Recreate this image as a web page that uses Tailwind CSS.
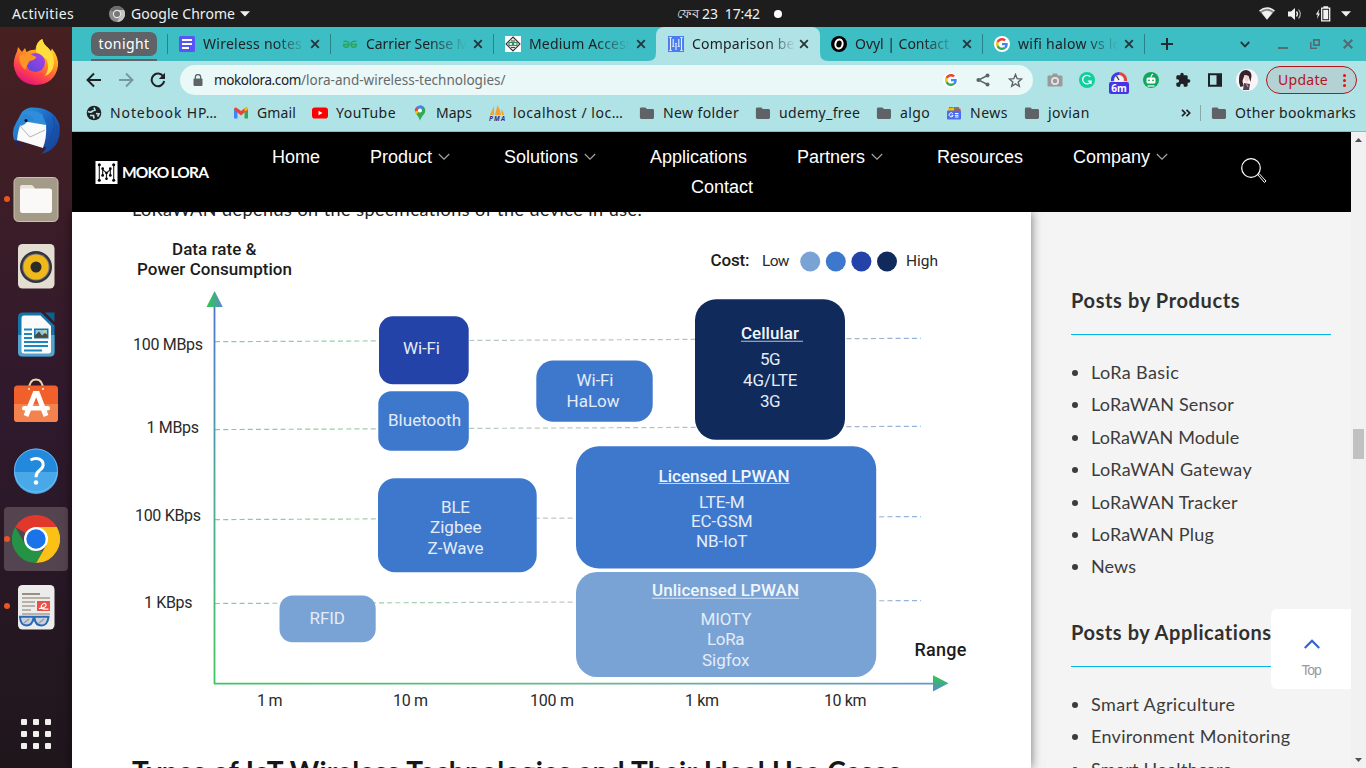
<!DOCTYPE html>
<html lang="en">
<head>
<meta charset="utf-8">
<title>Comparison between LoRa and wireless technologies</title>
<script src="https://cdn.jsdelivr.net/npm/@tailwindcss/browser@4"></script>
</head>
<body class="w-[1366px] h-[768px] overflow-hidden flex flex-col font-['Noto_Sans',sans-serif] text-[14px] text-[#202124]">
<svg class="hidden">
  <symbol id="x" viewBox="0 0 10 10"><path d="M1.2 1.2l7.6 7.6M8.800 1.200L1.200 8.800" stroke="#263338" stroke-width="1.800" fill="none"/></symbol>
  <symbol id="folder" viewBox="0 0 16 16"><path d="M2.200 2.500h4.200l1.600 1.600h5.600q1.400 0 1.400 1.400v7q0 1.400-1.400 1.400H2.300q-1.400 0-1.400-1.400V3.900q0-1.400 1.300-1.400z" fill="#5f6368"/></symbol>
  <symbol id="g" viewBox="0 0 48 48"><path fill="#ea4335" d="M24 9.500c3.540 0 6.710 1.220 9.210 3.600l6.850-6.850C35.900 2.380 30.470 0 24 0 14.620 0 6.510 5.380 2.560 13.220l7.980 6.190C12.430 13.720 17.740 9.500 24 9.500z"/><path fill="#4285f4" d="M46.980 24.550c0-1.570-.15-3.090-.38-4.550H24v9.020h12.940c-.58 2.960-2.260 5.480-4.780 7.180l7.730 6c4.510-4.180 7.090-10.360 7.090-17.650z"/><path fill="#fbbc05" d="M10.530 28.590c-.48-1.450-.76-2.990-.76-4.590s.27-3.140.76-4.590l-7.980-6.190C.92 16.460 0 20.120 0 24s.92 7.540 2.560 10.780l7.970-6.190z"/><path fill="#34a853" d="M24 48c6.480 0 11.930-2.130 15.890-5.810l-7.730-6c-2.150 1.450-4.920 2.300-8.160 2.300-6.260 0-11.570-4.220-13.470-9.910l-7.980 6.190C6.510 42.620 14.620 48 24 48z"/></symbol>
  <symbol id="chev" viewBox="0 0 12 8"><path d="M.8 1L6 6.200 11.200 1" stroke="#a8a8a8" stroke-width="1.100" fill="none"/></symbol>
</svg>

<!-- desktop bar -->
<header class="h-[27px] shrink-0 bg-[#1d1d1d] text-[#f0f0f0] flex items-center">
  <span class="ml-3 w-[97px] tracking-[0.37px]">Activities</span>
  <svg class="size-4" viewBox="0 0 16 16"><circle cx="8" cy="8" r="8" fill="#8b8b8b"/><path d="M8 4h7A8 8 0 0 1 8 16l3.500-6z" fill="#c4c4c4"/><path d="M1.200 4.100A8 8 0 0 1 15 4H8a4 4 0 0 0-3.400 2z" fill="#6c6c6c"/><circle cx="8" cy="8" r="4.200" fill="#e5e5e5"/><circle cx="8" cy="8" r="3" fill="#777"/></svg>
  <span class="ml-1.5 w-[109px] tracking-[0.05px]">Google Chrome</span>
  <svg class="w-[10px] h-[6px]" viewBox="0 0 10 6"><path d="M0 .3h10L5 5.500z" fill="#f0f0f0"/></svg>
  <span class="ml-[427px] w-[25px] text-[13px]">ফেব</span>
  <span class="w-[71px] whitespace-pre tracking-[-0.120px]">23  17:42</span>
  <i class="size-2 rounded-full bg-white ml-[1px]"></i>
  <svg class="ml-[477px] w-4 h-[14px]" viewBox="0 0 16 14"><path d="M.5 4Q8-2 15.500 4L8 13z" fill="#8a8a8a"/><path d="M.5 4Q8-2 15.500 4" stroke="#f2f2f2" stroke-width="1.400" fill="none"/><path d="M2.600 5.800Q8 1.800 13.400 5.800L8 12.600z" fill="#f2f2f2"/></svg>
  <svg class="ml-3 w-4 h-[14px]" viewBox="0 0 16 14"><path d="M1 4.500h3L8 1v12L4 9.500H1z" fill="#f2f2f2"/><path d="M9.500 4.500q2 2.500 0 5" stroke="#f2f2f2" stroke-width="1.300" fill="none"/><path d="M11.500 2.500q3.600 4.500 0 9" stroke="#aaa" stroke-width="1.200" fill="none"/></svg>
  <svg class="ml-3 w-4 h-4" viewBox="0 0 16 16"><path d="M4.500 3L.8 8.500h2L2 13l3-5.500H3.300z" fill="#f2f2f2"/><path d="M6.700 2.200h8v12.600h-8zM9 .8h3.500v1.400H9z" stroke="#f2f2f2" stroke-width="1.300" fill="none"/><path d="M8.300 3.800h4.900v9.400H8.300z" fill="#f2f2f2"/></svg>
  <svg class="ml-[10px] w-[10px] h-[6px]" viewBox="0 0 10 6"><path d="M0 .3h10L5 5.500z" fill="#f0f0f0"/></svg>
</header>

<div class="flex flex-1 min-h-0">
<!-- dock -->
<aside class="w-[72px] shrink-0 bg-linear-to-b from-[#472020] via-[#30192d] to-[#1f161c] flex flex-col items-center pt-px">
  <div class="h-[68px] flex items-center"><svg class="size-12" viewBox="0 0 48 48"><defs><linearGradient id="ff" x1=".8" y1="0" x2=".3" y2="1"><stop offset="0" stop-color="#fff04a"/><stop offset=".4" stop-color="#ff9a1e"/><stop offset=".75" stop-color="#ff4050"/><stop offset="1" stop-color="#e2107c"/></linearGradient><linearGradient id="fp" x1="1" y1="0" x2="0" y2="1"><stop offset="0" stop-color="#b040e8"/><stop offset="1" stop-color="#5548d8"/></linearGradient></defs><path d="M5 13.500l1-4.500 4 5 3-4 1.500 4q5-3 9-2.200Q24 4 30.200 1q1 5 5.500 8.500 2 1.800 3 4.500l1.200-3.600Q47 19 46 28 43 46 24 47 5 46 1.800 28q-.5-7 3.200-14.500z" fill="url(#ff)"/><path d="M30.200 1q1 5 5.500 8.500Q42 15 42 25q-1 10-9 13 5-8 2-15-1-3-6-5l-5-4Q24 4 30.200 1z" fill="#ffde3c"/><circle cx="23.500" cy="24.500" r="9.500" fill="url(#fp)"/><path d="M7 18q8-5 14-.5l3.500 1.500q-2 3.500-7 4-3 5-4 9Q7 27 7 18z" fill="#ff9426"/></svg></div>
  <div class="h-[68px] flex items-center pt-px"><svg class="size-12" viewBox="0 0 48 48"><defs><linearGradient id="tb" x1="0" y1="0" x2="1" y2="1"><stop offset="0" stop-color="#35a4e6"/><stop offset=".5" stop-color="#1b63c2"/><stop offset="1" stop-color="#183a8c"/></linearGradient></defs><path d="M19 .5Q42 0 47.500 18 50 42 29 47q5-4 5-7L2 33Q-1 24 4 16L10 5q4-4 9-4.500z" fill="url(#tb)"/><path d="M12 6q8-5 18 1l5 12-17-2z" fill="#2f8ddb"/><path d="M10 14l24 4q1 12-3 23L5 33Q6 22 10 14z" fill="#fafafa"/><path d="M8 19l10 11 15-7" stroke="#b5b5b5" stroke-width="1" fill="none"/><path d="M3 33l9 9q-7-3-9-9z" fill="#2b1f75"/><path d="M8 18q0-8 6-11 8 2 8 7-6-1-9 3l-4 2z" fill="#2a86d6"/><circle cx="14" cy="13.500" r="1.500" fill="#111"/><path d="M41 10q5 14-7 27M45 18q1 14-9 22" stroke="#1550a5" stroke-width="1.500" fill="none"/></svg></div>
  <div class="relative h-[68px] flex items-center pt-px"><i class="absolute -left-2 size-[6px] rounded-full bg-[#e95420]"></i><svg class="size-12" viewBox="0 0 48 48"><rect x="2" y="2.500" width="44" height="44" rx="4.500" fill="#a39b87" stroke="#c9c3b2"/><path d="M8 12q0-2 2-2h9q2 0 3 2l1 2h15q2 0 2 2v19q0 3-3 3H11q-3 0-3-3z" fill="#e8e4da"/><rect x="8" y="13.500" width="32" height="24.500" rx="3" fill="#faf9f8"/></svg></div>
  <div class="h-[68px] flex items-center"><svg class="size-12" viewBox="0 0 48 48"><rect x="6" y="2" width="36.500" height="44.500" rx="4.500" fill="#e3ddd2"/><circle cx="24" cy="25" r="16" fill="#34343c"/><circle cx="24" cy="25" r="13.600" fill="#787880"/><circle cx="24" cy="25" r="12.600" fill="#efb91a"/><circle cx="24" cy="25" r="5.500" fill="#2d2a28"/></svg></div>
  <div class="h-[68px] flex items-center"><svg class="size-12" viewBox="0 0 48 48"><path d="M11 2.500h18l13.500 13V42q0 4.500-4.500 4.500H10.500Q6 46.500 6 42V7q0-4.500 5-4.500z" fill="#1574a8"/><path d="M6 25h36.500v17q0 4.500-4.500 4.500H10.500Q6 46.500 6 42z" fill="#55a3cc"/><path d="M33 2.500h9.500V12z" fill="#0f618f"/><path d="M12 5.500h16.500L39 16v25q0 2.500-2.500 2.500H12Q9.500 43.500 9.500 41V8q0-2.500 2.500-2.500z" fill="#fbfbfb"/><path d="M12 19.500h8m-8 4.500h8m-8 4h8m-8 4h24m-24 4h24m-24 4.500h18" stroke="#1c86bd" stroke-width="2"/><path d="M22 18.500h14.500v10H22z" fill="#1a72a5"/><path d="M23.500 20h11.500v7H23.500z" fill="#8cc4e4"/><path d="M23 27.500v-2l4-4 3 4 3-2.500 2.500 2v2.500z" fill="#4a4a3c"/><circle cx="33" cy="21.500" r="1.300" fill="#f1d04c"/></svg></div>
  <div class="h-[68px] flex items-center"><svg class="size-12" viewBox="0 0 48 48"><path d="M17 12Q17 1.500 24 1.500T31 12" stroke="#efd9a8" stroke-width="2" fill="none"/><rect x="2" y="7.500" width="44" height="36.500" rx="3.500" fill="#f1602a"/><path d="M2 26h44v14.500q0 3.500-3.500 3.500h-37Q2 44 2 40.500z" fill="#f4824f"/><path d="M17 12v-2M31 12v-2" stroke="#efd9a8" stroke-width="2"/><path d="M14 38l9-22.500h2.500L34 38" stroke="#fff" stroke-width="5" fill="none"/><rect x="10" y="28" width="28" height="4.600" rx="2.300" fill="#fff"/></svg></div>
  <div class="h-[68px] flex items-center"><svg class="size-12" viewBox="0 0 48 48"><circle cx="24" cy="24.500" r="22" fill="#2389dc"/><path d="M2 26h44a22 22 0 0 1-44 0z" fill="#49a8e8"/><circle cx="24" cy="24.500" r="21.500" fill="none" stroke="#7cc0ee" stroke-width=".8"/><path d="M18.500 14q5-2.500 9-.8 4 2 3.600 6-.4 3-4 5.500-3.200 2.500-3.100 6.500" stroke="#fff" stroke-width="3" fill="none"/><circle cx="24" cy="36.500" r="2.200" fill="#fff"/></svg></div>
  <div class="relative h-[68px] w-16 flex items-center justify-center"><span class="absolute top-[3px] size-16 rounded-[4px] bg-[#54444f]"></span><i class="absolute left-0 top-[32px] size-[6px] rounded-full bg-[#e95420]"></i><svg class="relative top-[1px] size-12" viewBox="0 0 48 48"><path d="M24 24L3.200 12A24 24 0 0 1 44.800 12z" fill="#e0392b"/><path d="M24 12h20.800A24 24 0 0 1 24 48l10.400-18z" fill="#fbc116"/><path d="M24 48A24 24 0 0 1 3.200 12l10.400 18L24 36h6.900z" fill="#249343"/><circle cx="24" cy="24" r="12" fill="#fff"/><circle cx="24" cy="24" r="9.700" fill="#1a73e8"/></svg></div>
  <div class="relative h-[68px] flex items-center"><i class="absolute -left-2 size-[6px] rounded-full bg-[#e95420]"></i><svg class="size-12" viewBox="0 0 48 48"><rect x="6" y="3" width="36.500" height="44.500" rx="4.500" fill="#ececec"/><path d="M10 12h18" stroke="#9a8f80" stroke-width="2"/><path d="M10 16h28M10 20h13M10 24h13M10 28h9M10 32h28" stroke="#b9b1a5" stroke-width="2"/><rect x="25" y="19" width="13" height="10" fill="#ee4f45"/><path d="M27 26.500q8-1 7-4-2-2.500-4.500 1-1.500 4.500 7 3.500" stroke="#fff" stroke-width="1.200" fill="none"/><path d="M7 34.800h30.500M8 35q.5 8.500 6.500 8.500 5.500 0 7-7 0-1 1 0 1 7 7 7 6 0 7-8.500" stroke="#2a69b5" stroke-width="2" fill="#c9d2dc"/><path d="M12 41l5-4M27 41l5-4" stroke="#8d98a5" stroke-width="1.200"/></svg></div>
  <div class="mt-[79px] grid grid-cols-3 gap-[6px]">
    <i class="size-[6px] rounded-[1px] bg-[#f0efed]"></i><i class="size-[6px] rounded-[1px] bg-[#f0efed]"></i><i class="size-[6px] rounded-[1px] bg-[#f0efed]"></i><i class="size-[6px] rounded-[1px] bg-[#f0efed]"></i><i class="size-[6px] rounded-[1px] bg-[#f0efed]"></i><i class="size-[6px] rounded-[1px] bg-[#f0efed]"></i><i class="size-[6px] rounded-[1px] bg-[#f0efed]"></i><i class="size-[6px] rounded-[1px] bg-[#f0efed]"></i><i class="size-[6px] rounded-[1px] bg-[#f0efed]"></i>
  </div>
</aside>

<div class="flex-1 min-w-0 flex flex-col">
<!-- tab strip -->
<div class="h-[34px] shrink-0 bg-[#3dbec5] flex">
  <div class="w-24 flex flex-col pl-[19px] pt-[5px] relative">
    <span class="w-[66px] h-6 rounded-[7px] bg-[#5f6368] text-white flex items-center justify-center tracking-[0.41px] pb-0.5">tonight</span>
    <i class="mt-[3px] w-[66px] h-[2px] bg-[#5f6368]"></i>
    <i class="absolute right-0 top-[7px] w-px h-5 bg-[#2a8287]"></i>
  </div>
  <div class="relative w-[163px] flex items-center pl-[11px]">
    <svg class="size-4 mr-2 shrink-0" viewBox="0 0 16 16"><rect width="16" height="16" rx="1.500" fill="#5955f5"/><path d="M3 4h10M3 8h10M3 12h7" stroke="#fff" stroke-width="1.800"/></svg>
    <span class="w-[103px] pb-px overflow-hidden whitespace-nowrap tracking-[0.26px] mask-r-from-70% mask-r-to-100%">Wireless notes</span><svg class="size-[10px] ml-[4px] shrink-0"><use href="#x"/></svg>
    <i class="absolute right-0 top-[7px] w-px h-5 bg-[#2a8287]"></i>
  </div>
  <div class="relative w-[163px] flex items-center pl-[11px]">
    <svg class="size-4 mr-2 shrink-0" viewBox="0 0 16 16"><path d="M7.500 8.500H1M1.500 5.500q5.500-1 5.500 2.800 0 3-2.800 3T1.500 8.500M8.500 8.500H15M14.500 5.500Q9 4.500 9 8.300q0 3 2.800 3t2.700-2.800" stroke="#2ba45b" stroke-width="1.400" fill="none"/></svg>
    <span class="w-[103px] pb-px overflow-hidden whitespace-nowrap tracking-[-0.080px] mask-r-from-60% mask-r-to-98%">Carrier Sense M</span><svg class="size-[10px] ml-[4px] shrink-0"><use href="#x"/></svg>
    <i class="absolute right-0 top-[7px] w-px h-5 bg-[#2a8287]"></i>
  </div>
  <div class="relative w-[163px] flex items-center pl-[11px]">
    <svg class="size-4 mr-2 shrink-0" viewBox="0 0 16 16"><path fill="#fff" d="M0 0h16v16H0z"/><path d="M8 1l7 7-7 7-7-7z" fill="#e6f0ea" stroke="#333" stroke-width="1.100"/><path d="M4 6.500h3.500v3H4zM8.500 6.500H12v3H8.500z" stroke="#3d8a61" stroke-width="1.200" fill="none"/><path d="M6 5h4M6 11.500h4" stroke="#444" stroke-width="1"/></svg>
    <span class="w-[103px] pb-px overflow-hidden whitespace-nowrap tracking-[0.150px] mask-r-from-65% mask-r-to-98%">Medium Access</span><svg class="size-[10px] ml-[4px] shrink-0"><use href="#x"/></svg>
  </div>
  <div class="relative -ml-px w-[164px] flex items-center pl-3 bg-[#b0e3e5] rounded-t-[8px]">
    <svg class="absolute -left-2 bottom-0 size-2" viewBox="0 0 8 8"><path d="M8 0v8H0Q8 8 8 0z" fill="#b0e3e5"/></svg>
    <svg class="absolute -right-2 bottom-0 size-2" viewBox="0 0 8 8"><path d="M0 0v8h8Q0 8 0 0z" fill="#b0e3e5"/></svg>
    <svg class="size-4 mr-2 shrink-0" viewBox="0 0 16 16"><path fill="#4a7cf0" d="M0 0h16v16H0z"/><path d="M2.500 1v14M13.500 1v14M5.200 3v8M10.800 3v8M8 7v7" stroke="#e8f0ff" stroke-width="1.100" fill="none"/><path d="M1 1.500h3M12 1.500h3M1 14.500h3M12 14.500h3M4 10.500h2.500M9.500 10.500H12M7 7.500h2" stroke="#c9dafc" stroke-width="1.200"/></svg>
    <span class="w-[103px] pb-px overflow-hidden whitespace-nowrap tracking-[0.190px] mask-r-from-75% mask-r-to-100%">Comparison be</span><svg class="size-[10px] ml-[4px] shrink-0"><use href="#x"/></svg>
  </div>
  <div class="relative w-[163px] flex items-center pl-[11px]">
    <svg class="size-4 mr-2 shrink-0" viewBox="0 0 16 16"><circle cx="8" cy="8" r="8" fill="#000"/><ellipse cx="8" cy="8" rx="3.600" ry="4.600" transform="rotate(12 8 8)" fill="none" stroke="#fff" stroke-width="2"/></svg>
    <span class="w-[103px] pb-px overflow-hidden whitespace-nowrap tracking-[-0.030px] mask-r-from-65% mask-r-to-98%">Ovyl | Contact</span><svg class="size-[10px] ml-[4px] shrink-0"><use href="#x"/></svg>
    <i class="absolute right-0 top-[7px] w-px h-5 bg-[#2a8287]"></i>
  </div>
  <div class="relative w-[162px] flex items-center pl-[11px]">
    <span class="size-4 mr-2 shrink-0 rounded-full bg-white flex items-center justify-center"><svg class="size-3"><use href="#g"/></svg></span>
    <span class="w-[102px] pb-px overflow-hidden whitespace-nowrap tracking-[0.270px] mask-r-from-65% mask-r-to-98%">wifi halow vs lo</span><svg class="size-[10px] ml-[4px] shrink-0"><use href="#x"/></svg>
    <i class="absolute right-0 top-[7px] w-px h-5 bg-[#2a8287]"></i>
  </div>
  <div class="flex items-center">
    <svg class="ml-[16px] size-3" viewBox="0 0 12 12"><path d="M6 0v12M0 6h12" stroke="#1d2d30" stroke-width="2"/></svg>
    <svg class="ml-[67px] w-[10px] h-[7px]" viewBox="0 0 10 7"><path d="M.8 1L5 5.300 9.200 1" stroke="#20393c" stroke-width="1.900" fill="none"/></svg>
    <i class="ml-7 mt-[7px] w-[10px] h-[2px] bg-[#576a6e]"></i>
    <svg class="ml-[22px] size-[10px]" viewBox="0 0 10 10"><path d="M3.800.8h5.400v5.400H3.800z" stroke="#576a6e" stroke-width="1.700" fill="none"/><path d="M.8 3v6.200H7" stroke="#576a6e" stroke-width="1.500" fill="none"/></svg>
    <svg class="ml-[23px] size-[10px]" viewBox="0 0 10 10"><path d="M.7.7l8.600 8.600M9.300.7L.7 9.300" stroke="#576a6e" stroke-width="2.100"/></svg>
  </div>
</div>

<!-- toolbar -->
<div class="h-[36px] shrink-0 bg-[#b0e3e5] flex items-center pl-[14px] pt-[2px]">
  <svg class="size-4" viewBox="0 0 16 16"><path d="M15 8H2M8 1.500L1.500 8 8 14.500" stroke="#202124" stroke-width="1.900" fill="none"/></svg>
  <svg class="ml-4 size-4" viewBox="0 0 16 16"><path d="M1 8h13M8 1.500L14.500 8 8 14.500" stroke="#78999b" stroke-width="1.900" fill="none"/></svg>
  <svg class="ml-4 size-4" viewBox="0 0 16 16"><path d="M13.300 4.500A6.300 6.300 0 1 0 14.200 9" stroke="#202124" stroke-width="2" fill="none"/><path d="M15 .8v6.200H8.800z" fill="#202124"/></svg>
  <div class="ml-[14px] w-[853px] h-[30px] rounded-full bg-[#eaf8f8] flex items-center pl-[13px]">
    <svg class="w-[10px] h-3 mb-px" viewBox="0 0 10 12"><path d="M2.300 5V3.200a2.700 2.700 0 0 1 5.400 0V5" stroke="#5f6368" stroke-width="1.300" fill="none"/><rect x=".5" y="4.500" width="9" height="7.500" rx="1" fill="#5f6368"/></svg>
    <span class="ml-[11px] w-[87px] text-[13.500px] tracking-[-0.390px] whitespace-nowrap">mokolora.com</span><span class="flex-1 text-[13.500px] tracking-[0.010px] text-[#66696d] whitespace-nowrap">/lora-and-wireless-technologies/</span>
    <span class="size-[15px] rounded-full bg-white flex items-center justify-center shrink-0"><svg class="size-3"><use href="#g"/></svg></span>
    <svg class="ml-[18px] size-[14px] shrink-0" viewBox="0 0 14 14"><path d="M11.500 2.500L2.500 7l9 4.500" stroke="#5f6368" stroke-width="1.400" fill="none"/><circle cx="11.500" cy="2.500" r="2" fill="#5f6368"/><circle cx="2.500" cy="7" r="2.100" fill="#5f6368"/><circle cx="11.500" cy="11.500" r="2" fill="#5f6368"/></svg>
    <svg class="ml-[18px] mr-[10px] size-[15px] shrink-0" viewBox="0 0 15 15"><path d="M7.500 1.500l1.700 4.200 4.500.3-3.500 2.900 1.100 4.400-3.800-2.400-3.800 2.400 1.100-4.400L1.300 6l4.500-.3z" stroke="#5f6368" stroke-width="1.400" fill="none"/></svg>
  </div>
  <svg class="ml-[14px] w-4 h-[14px]" viewBox="0 0 16 14"><path d="M1.500 2.500H5L6 .5h4l1 2h3.500Q15.500 2.500 15.500 4v8.500q0 1-1 1h-13q-1 0-1-1V4q0-1.500 1-1.500z" fill="#9a9a9a"/><circle cx="8" cy="8" r="4" fill="#e6e6e6"/><circle cx="8" cy="8" r="2.300" fill="#9a9a9a"/></svg>
  <svg class="ml-4 size-4" viewBox="0 0 16 16"><circle cx="8" cy="8" r="8" fill="#12ce9f"/><path d="M11.300 4.800A4.300 4.300 0 1 0 12 9.200H8.800M12 9v3" stroke="#fff" stroke-width="1.300" fill="none"/></svg>
  <div class="relative ml-[14px] mt-[7px] w-5 h-[22px]"><svg class="absolute left-[2px] -top-[2px] size-4" viewBox="0 0 16 16"><path d="M1.500 10A6.500 6.500 0 0 1 8 2.500" stroke="#4734e6" stroke-width="3" fill="none"/><path d="M8 2.500A6.500 6.500 0 0 1 14.500 10" stroke="#e54343" stroke-width="3" fill="none"/><circle cx="8" cy="9" r="4.500" fill="#f3f3f3"/><path d="M8 9L5.500 5" stroke="#333" stroke-width="1.300"/></svg><b class="absolute top-[9px] w-5 h-3 rounded-[2px] bg-[#4734e6] text-white text-[10px] leading-[12px] text-center font-bold">6m</b></div>
  <svg class="ml-[14px] size-4" viewBox="0 0 16 16"><circle cx="8" cy="8" r="8" fill="#12a65c"/><rect x="3.500" y="5.500" width="9" height="6" rx="1.500" fill="#fff"/><path d="M8 5.500Q8 3 10 2" stroke="#fff" stroke-width="1.200" fill="none"/><circle cx="6" cy="8.300" r=".9" fill="#12a65c"/><circle cx="10" cy="8.300" r=".9" fill="#12a65c"/><path d="M4.500 14h7" stroke="#fff" stroke-width="1.200"/></svg>
  <svg class="ml-4 size-4" viewBox="0 0 24 24"><path d="M20.500 11H19V7c0-1.100-.9-2-2-2h-4V3.500a2.500 2.500 0 0 0-5 0V5H4c-1.100 0-2 .9-2 2v3.800h1.500a2.700 2.700 0 0 1 0 5.400H2V20c0 1.100.9 2 2 2h3.800v-1.500a2.700 2.700 0 0 1 5.400 0V22H17c1.100 0 2-.9 2-2v-4h1.500a2.500 2.500 0 0 0 0-5z" fill="#202124"/></svg>
  <svg class="ml-4 size-4" viewBox="0 0 16 16"><path d="M2 2.200h12v11.600H2z" stroke="#202124" stroke-width="2" fill="none"/><path d="M9.500 2H14v12H9.500z" fill="#202124"/></svg>
  <svg class="ml-[13px] size-[22px]" viewBox="0 0 22 22"><circle cx="11" cy="11" r="11" fill="#faf4f6"/><path d="M3.500 6q2-5 7-5 5 1 5 6l-1 6-2-6-4-1-2 6 1 5-3 1Q2 13 3.500 6z" fill="#35252a"/><path d="M8 7q4-2 5 2l-1 4-3-1z" fill="#f3d5d0"/><path d="M8 14l6 1-1 6H7z" fill="#4a4652"/><path d="M10 14l2 4" stroke="#d67e8c" stroke-width="1.200"/></svg>
  <div class="ml-2 w-[91px] h-[28px] rounded-full border border-[#b3151b] bg-[#b4d1d3] flex items-center text-[#b3151b]"><span class="ml-[11px] w-[65px] tracking-[0.300px] pb-px">Update</span><span class="flex flex-col gap-[2px]"><i class="size-[3px] rounded-full bg-[#e01010]"></i><i class="size-[3px] rounded-full bg-[#e01010]"></i><i class="size-[3px] rounded-full bg-[#e01010]"></i></span></div>
</div>

<!-- bookmarks -->
<div class="h-[35px] shrink-0 bg-[#b0e3e5] border-b border-[#8db9bb] flex items-center pl-[14px] pb-[3px] whitespace-nowrap">
  <svg class="size-4 mr-2" viewBox="0 0 16 16"><circle cx="8" cy="8" r="7.300" fill="#202124"/><path d="M2 6.500Q5 8 6.500 6L9 5l-1-2.500M4 10.500h3.500l.5 3M10 8.500l3 .5-1.500 2.500" stroke="#b0e3e5" stroke-width="1.700" fill="none"/></svg>
  <span class="w-[123px] tracking-[0.900px]">Notebook HP…</span>
  <svg class="size-4 mr-2" viewBox="0 0 16 16"><path d="M1 13.500V3.500l3.500 2.800v7.200z" fill="#4285f4"/><path d="M15 13.500V3.500l-3.500 2.800v7.200z" fill="#34a853"/><path d="M1 4.500Q1.200 1.500 4 3l4 3 4-3q2.800-1.500 3 1.500L8 10.500z" fill="#ea4335"/><path d="M11.500 6.500V3.300Q14.800 1.200 15 4.500z" fill="#fbbc04"/></svg>
  <span class="w-[55px] tracking-[0.130px]">Gmail</span>
  <svg class="size-4 mr-2" viewBox="0 0 16 16"><rect y="2.500" width="16" height="11" rx="2.800" fill="#f00"/><path d="M6.500 5.700L10.500 8l-4 2.300z" fill="#fff"/></svg>
  <span class="w-[76px] tracking-[0.490px]">YouTube</span>
  <svg class="size-4 mr-2" viewBox="0 0 16 16"><path d="M8 .3a5.300 5.300 0 0 1 5.300 5.300c0 3.600-3.500 5-5.300 10.100C6.800 11.500 4.800 10 3.600 8z" fill="#34a853"/><path d="M3 7A5.300 5.300 0 0 1 4.200 2L8 5.600 4.500 9.500z" fill="#fbbc04"/><path d="M2.800 6.500A5.300 5.300 0 0 1 4.500 1.700L7 5z" fill="#ea4335"/><path d="M4.200 2A5.300 5.300 0 0 1 12 2.200L8 6z" fill="#4285f4"/><circle cx="8" cy="5.500" r="2" fill="#fff"/></svg>
  <span class="w-[53px] tracking-[0.030px]">Maps</span>
  <svg class="size-4 mr-2" viewBox="0 0 16 16"><path d="M5 1v9H1zM8.500 0q3 5 3.500 10H6zM12 4q3 3 3 6h-2z" fill="#f7a12b"/><text x="0" y="15.500" font-size="6.500" font-weight="700" font-style="italic" textLength="16" fill="#35307a">PMA</text></svg>
  <span class="w-[126px] tracking-[0.560px]">localhost / loc…</span>
  <svg class="size-4 mr-2"><use href="#folder"/></svg><span class="w-[92px] tracking-[0.400px]">New folder</span>
  <svg class="size-4 mr-2"><use href="#folder"/></svg><span class="w-[97px] tracking-[0.340px]">udemy_free</span>
  <svg class="size-4 mr-2"><use href="#folder"/></svg><span class="w-[46px] tracking-[0.400px]">algo</span>
  <svg class="size-4 mr-2" viewBox="0 0 16 16"><path d="M3 2h10v4H3z" fill="#34a853"/><path d="M2 3.500l6-1v4H2z" fill="#fbbc04"/><path d="M14.500 3.500l-6 0v4h6z" fill="#ea4335"/><rect x="1" y="5.500" width="14" height="9" rx="1" fill="#4a6cf0"/><path d="M6.800 8.700a2 2 0 1 0 .3 1.600H5.500M9 8.500h3.500M9 10.300h3.500M9 12h3.500" stroke="#fff" stroke-width="1" fill="none"/></svg>
  <span class="w-[54px] tracking-[0.500px]">News</span>
  <svg class="size-4 mr-2"><use href="#folder"/></svg><span class="w-[133px] tracking-[0.450px]">jovian</span>
  <svg class="w-[10px] h-2" viewBox="0 0 10 8"><path d="M1 .8L4.200 4 1 7.200M5.500.8L8.700 4 5.500 7.200" stroke="#202124" stroke-width="1.700" fill="none"/></svg>
  <i class="ml-[9px] mr-[10px] w-px h-4 bg-[#86a9ab]"></i>
  <svg class="size-4 mr-2"><use href="#folder"/></svg><span class="tracking-[0.350px]">Other bookmarks</span>
</div>

<!-- page -->
<div class="flex-1 min-h-0 flex">
<div class="w-[1279px] flex flex-col min-h-0 relative">
  <nav class="h-20 shrink-0 bg-black text-white flex relative z-10 font-['Liberation_Sans',sans-serif] text-[18px] leading-[30px]">
    <div class="ml-[23px] flex items-center w-[152px]">
      <svg class="size-[23px] shrink-0" viewBox="0 0 23 24"><path fill="#fff" d="M0 0h23v24H0z"/><path d="M4 4v16M19 4v16M7.500 8v7M15.500 8v7M11.500 12v7M7.500 9l4 3.500 4-3.500" stroke="#222" stroke-width="1.200" fill="none"/><g fill="#000"><circle cx="4" cy="4" r="1.600"/><circle cx="19" cy="4" r="1.600"/><circle cx="4" cy="20" r="1.600"/><circle cx="19" cy="20" r="1.600"/><circle cx="7.500" cy="8" r="1.400"/><circle cx="15.500" cy="8" r="1.400"/><circle cx="7.500" cy="15" r="1.400"/><circle cx="15.500" cy="15" r="1.400"/><circle cx="11.500" cy="12.500" r="1.400"/><circle cx="11.500" cy="18.500" r="1.400"/></g></svg>
      <span class="ml-1 font-['Lato',sans-serif] font-bold text-[15.500px] tracking-[-0.800px] [word-spacing:-1px] whitespace-nowrap">MOKO LORA</span>
    </div>
    <div class="ml-[25px] pt-[10px] w-[945px]">
      <div class="flex gap-[50px] whitespace-nowrap">
        <span class="w-12">Home</span>
        <span class="w-[84px] flex items-center">Product<svg class="ml-[6px] w-3 h-2"><use href="#chev"/></svg></span>
        <span class="w-[96px] flex items-center">Solutions<svg class="ml-[6px] w-3 h-2"><use href="#chev"/></svg></span>
        <span class="w-[97px]">Applications</span>
        <span class="w-[90px] flex items-center">Partners<svg class="ml-[6px] w-3 h-2"><use href="#chev"/></svg></span>
        <span class="w-[86px]">Resources</span>
        <span class="flex items-center">Company<svg class="ml-[6px] w-3 h-2"><use href="#chev"/></svg></span>
      </div>
      <div class="pl-[419px]">Contact</div>
    </div>
    <svg class="ml-6 mt-[26px] size-[26px]" viewBox="0 0 26 26"><circle cx="10" cy="10" r="9.300" stroke="#fff" stroke-width="1.200" fill="none"/><path d="M16.500 16.500l1.500-1 7 7.500-1.500 1.500z" stroke="#fff" stroke-width="1" fill="none"/></svg>
  </nav>

  <div class="flex flex-1 min-h-0 bg-[#f4f4f4]">
    <main class="w-[959px] bg-white overflow-hidden pl-[60px] shadow-[0_0_10px_rgba(0,0,0,0.55)] relative font-['Lato',sans-serif]">
      <p class="-mt-[15px] h-[29px] text-[18px] leading-6 tracking-[0.470px] whitespace-nowrap text-[#222]">LoRaWAN depends on the specifications of the device in use.</p>
      <svg class="w-[900px] h-[510px] font-['Roboto',sans-serif]" viewBox="132 226 900 510">
        <defs>
          <linearGradient id="ay" x1="0" y1="305" x2="0" y2="684" gradientUnits="userSpaceOnUse"><stop offset="0" stop-color="#4a78d4"/><stop offset=".45" stop-color="#4fa59a"/><stop offset="1" stop-color="#42c566"/></linearGradient>
          <linearGradient id="ax" x1="214" y1="0" x2="935" y2="0" gradientUnits="userSpaceOnUse"><stop offset="0" stop-color="#3fc564"/><stop offset=".5" stop-color="#6cb98c"/><stop offset="1" stop-color="#6397d0"/></linearGradient>
          <linearGradient id="ds" x1="214" y1="0" x2="921" y2="0" gradientUnits="userSpaceOnUse"><stop offset="0" stop-color="#79d292"/><stop offset=".3" stop-color="#a9cdb3"/><stop offset=".5" stop-color="#c0c6c2"/><stop offset=".85" stop-color="#b4bac0"/><stop offset="1" stop-color="#8fb2dc"/></linearGradient>
          <linearGradient id="ah" x1="0" y1="0" x2="1" y2="0"><stop offset=".2" stop-color="#33c15c"/><stop offset=".9" stop-color="#5a8cc4"/></linearGradient>
          <linearGradient id="ar" x1="0" y1="0" x2="0" y2="1"><stop offset=".2" stop-color="#33c15c"/><stop offset=".9" stop-color="#5a8cc4"/></linearGradient>
        </defs>
        <path d="M215 341.700L921 338.300M215 429.600L921 426.300M215 519.600L921 516.600M215 603.500L921 600.600" fill="none" stroke="url(#ds)" stroke-width="1.200" stroke-dasharray="5 3.200"/>
        <path d="M213.600 305h1.800v379h-1.800z" fill="url(#ay)"/><path d="M214 682.700h720v1.700H214z" fill="url(#ax)"/>
        <path d="M214.600 291l8.200 16h-16.300z" fill="url(#ah)"/><path d="M948.500 683.300l-15.500 8.200v-16.300z" fill="url(#ar)"/>
        <rect x="379" y="316.300" width="89.700" height="68" rx="14" fill="#2443a8"/>
        <rect x="378.300" y="391.200" width="90.500" height="59.500" rx="13" fill="#3e78cd"/>
        <rect x="536.300" y="360.500" width="116.400" height="61.200" rx="17" fill="#3e78cd"/>
        <rect x="695" y="299.300" width="150" height="140.500" rx="21" fill="#102b5b"/>
        <rect x="576" y="446.200" width="300.200" height="122.200" rx="23" fill="#3e78cd"/>
        <rect x="576" y="572" width="300.200" height="105" rx="21" fill="#79a3d5"/>
        <rect x="378" y="478.300" width="158.700" height="93.900" rx="17" fill="#3e78cd"/>
        <rect x="279.500" y="595.500" width="96.200" height="46.700" rx="13" fill="#79a3d5"/>
        <circle cx="810.200" cy="261.500" r="10" fill="#79a3d5"/><circle cx="835.800" cy="261.500" r="10" fill="#3e78cd"/><circle cx="861.400" cy="261.500" r="10" fill="#2443a8"/><circle cx="887" cy="261.500" r="10" fill="#102b5b"/>
        <g fill="#1c1c1c" font-size="17" font-weight="500">
          <text x="172" y="255" textLength="84.500">Data rate &amp;</text><text x="137" y="275" textLength="155">Power Consumption</text>
          <text x="710.500" y="266.400" textLength="39">Cost:</text><text x="914.500" y="655.500" textLength="52" font-size="18">Range</text>
        </g>
        <g fill="#2a2a2a" font-size="16">
          <text x="133" y="350.300" textLength="70">100 MBps</text><text x="146.500" y="433.400" textLength="52.500">1 MBps</text><text x="135" y="521" textLength="66">100 KBps</text><text x="144" y="608" textLength="48.500">1 KBps</text>
          <text x="762" y="265.500" textLength="27.500" font-size="15.500">Low</text><text x="906" y="266.400" textLength="32" font-size="15.500">High</text>
          <text x="257" y="706" textLength="25.500">1 m</text><text x="393" y="706" textLength="35">10 m</text><text x="530" y="706" textLength="44">100 m</text><text x="685" y="706" textLength="34">1 km</text><text x="824" y="706" textLength="42.500">10 km</text>
        </g>
        <g fill="#e4ecf8" font-size="17">
          <text x="403" y="354" textLength="37">Wi-Fi</text><text x="388" y="426.300" textLength="73">Bluetooth</text>
          <text x="576.500" y="386.300" textLength="37">Wi-Fi</text><text x="566.500" y="407" textLength="53">HaLow</text>
          <text x="760" y="365.300" textLength="20.500">5G</text><text x="743" y="386" textLength="54.500">4G/LTE</text><text x="760" y="406.500" textLength="20.500">3G</text>
          <text x="699" y="508" textLength="45.500">LTE-M</text><text x="691" y="527" textLength="61.500">EC-GSM</text><text x="696" y="547.300" textLength="51.500">NB-IoT</text>
          <text x="700.500" y="625.200" textLength="51">MIOTY</text><text x="707" y="645.400" textLength="37.500">LoRa</text><text x="702" y="666" textLength="47.500">Sigfox</text>
          <text x="441" y="513.400" textLength="29">BLE</text><text x="430" y="533.400" textLength="51.500">Zigbee</text><text x="427.500" y="554.300" textLength="56">Z-Wave</text><text x="309.500" y="624" textLength="35.500">RFID</text>
        </g>
        <g fill="#f0f5fc" font-size="17" font-weight="500">
          <text x="741" y="339.300" textLength="58">Cellular</text><text x="658.500" y="482" textLength="131">Licensed LPWAN</text><text x="652" y="596.300" textLength="147">Unlicensed LPWAN</text>
          <path d="M741 340.700h62v1.100h-62zM658.500 483h131v1.100h-131zM652 597.700h147v1.100H652z" opacity=".75"/>
        </g>
      </svg>
      <h2 class="mt-[19px] text-[28px] leading-8 font-bold tracking-[0.270px] whitespace-nowrap text-[#161616]">Types of IoT Wireless Technologies and Their Ideal Use Cases</h2>
    </main>
    <aside class="w-80 overflow-hidden pl-10 pr-5 pt-[73px] font-['Lato',sans-serif] text-[18px] text-[#3c3c3c] tracking-[0.280px] whitespace-nowrap">
      <h3 class="h-[50px] border-b border-[#00b8ec] text-[20px] leading-[30px] font-bold tracking-[0.620px] text-[#303030]">Posts by Products</h3>
      <ul class="mt-[21px] ml-5 list-disc leading-[32.400px]">
        <li class="tracking-[0.380px]">LoRa Basic</li><li class="tracking-[0.220px]">LoRaWAN Sensor</li><li class="tracking-[0.120px]">LoRaWAN Module</li><li class="tracking-[0.340px]">LoRaWAN Gateway</li><li class="tracking-[0.260px]">LoRaWAN Tracker</li><li class="tracking-[0.200px]">LoRaWAN Plug</li><li class="tracking-[0.100px]">News</li>
      </ul>
      <h3 class="mt-[34px] h-[50px] border-b border-[#00b8ec] text-[20px] leading-[30px] font-bold tracking-[0.560px] text-[#303030]">Posts by Applications</h3>
      <ul class="mt-[21px] ml-5 list-disc leading-[32.400px]">
        <li class="tracking-[0.380px]">Smart Agriculture</li><li>Environment Monitoring</li><li>Smart Healthcare</li>
      </ul>
    </aside>
  </div>
  <a class="absolute right-0 top-[477px] w-20 h-20 rounded-l-[6px] bg-white flex flex-col items-center pt-[30px]">
    <svg class="w-4 h-[10px] ml-px" viewBox="0 0 16 10"><path d="M.8 9L8 1.800 15.200 9" stroke="#2f5fd0" stroke-width="2.100" fill="none"/></svg>
    <span class="mt-[11px] font-['Liberation_Sans',sans-serif] text-[14px] leading-5 tracking-[-1.200px] text-[#999]">Top</span>
  </a>
</div>
<div class="w-[15px] bg-[#f1f1f1] flex flex-col items-center">
  <svg class="mt-[6px] w-[7px] h-1 shrink-0" viewBox="0 0 7 4"><path d="M0 4L3.500 0 7 4z" fill="#505050"/></svg>
  <i class="mt-[287px] w-[11px] h-[30px] bg-[#c1c1c1]"></i>
  <svg class="mt-auto mb-[6px] w-[7px] h-1 shrink-0" viewBox="0 0 7 4"><path d="M0 0l3.500 4L7 0z" fill="#505050"/></svg>
</div>
</div>
</div>
</div>
</body>
</html>
